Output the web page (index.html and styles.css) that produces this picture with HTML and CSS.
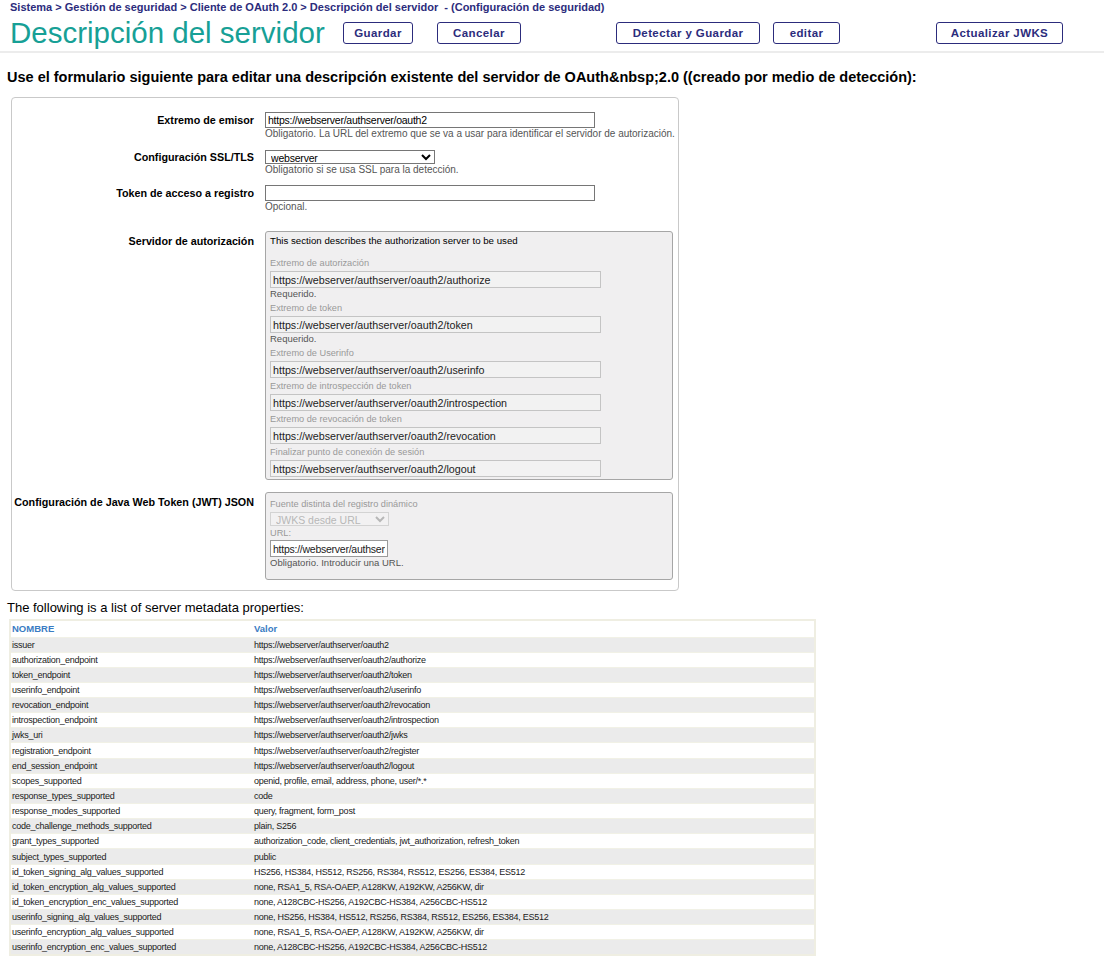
FILE: index.html
```html
<!DOCTYPE html>
<html lang="es">
<head>
<meta charset="utf-8">
<title>Descripción del servidor</title>
<link rel="stylesheet" href="styles.css">
</head>
<body>
<header class="top">
  <nav class="crumbs">Sistema &gt; Gestión de seguridad &gt; Cliente de OAuth 2.0 &gt; Descripción del servidor &nbsp;- (Configuración de seguridad)</nav>
  <div class="titlebar">
    <h1 class="title">Descripción del servidor</h1>
    <button class="btn btn-guardar">Guardar</button>
    <button class="btn btn-cancelar">Cancelar</button>
    <button class="btn btn-detectar">Detectar y Guardar</button>
    <button class="btn btn-editar">editar</button>
    <button class="btn btn-jwks">Actualizar JWKS</button>
  </div>
</header>

<main>
  <h2 class="intro">Use el formulario siguiente para editar una descripción existente del servidor de OAuth&amp;nbsp;2.0 ((creado por medio de detección):</h2>

  <div class="formbox">
    <div class="row row-1">
      <label class="lbl lbl-input">Extremo de emisor</label>
      <div class="field">
        <input class="txt" type="text" value="https://webserver/authserver/oauth2">
        <div class="help">Obligatorio. La URL del extremo que se va a usar para identificar el servidor de autorización.</div>
      </div>
    </div>
    <div class="row row-2">
      <label class="lbl lbl-select">Configuración SSL/TLS</label>
      <div class="field">
        <select class="sel"><option>webserver</option></select>
        <div class="help">Obligatorio si se usa SSL para la detección.</div>
      </div>
    </div>
    <div class="row row-3">
      <label class="lbl lbl-input">Token de acceso a registro</label>
      <div class="field">
        <input class="txt" type="text" value="">
        <div class="help">Opcional.</div>
      </div>
    </div>
    <div class="row row-4">
      <label class="lbl lbl-box">Servidor de autorización</label>
      <div class="field">
        <div class="group auth">
          <div class="desc">This section describes the authorization server to be used</div>
          <div class="glabel">Extremo de autorización</div>
          <input class="gtxt" type="text" disabled value="https://webserver/authserver/oauth2/authorize">
          <div class="req">Requerido.</div>
          <div class="glabel">Extremo de token</div>
          <input class="gtxt" type="text" disabled value="https://webserver/authserver/oauth2/token">
          <div class="req">Requerido.</div>
          <div class="glabel">Extremo de Userinfo</div>
          <input class="gtxt" type="text" disabled value="https://webserver/authserver/oauth2/userinfo">
          <div class="glabel">Extremo de introspección de token</div>
          <input class="gtxt" type="text" disabled value="https://webserver/authserver/oauth2/introspection">
          <div class="glabel">Extremo de revocación de token</div>
          <input class="gtxt" type="text" disabled value="https://webserver/authserver/oauth2/revocation">
          <div class="glabel">Finalizar punto de conexión de sesión</div>
          <input class="gtxt" type="text" disabled value="https://webserver/authserver/oauth2/logout">
        </div>
      </div>
    </div>
    <div class="row row-5">
      <label class="lbl lbl-box">Configuración de Java Web Token (JWT) JSON</label>
      <div class="field">
        <div class="group jwt">
          <div class="jlabel">Fuente distinta del registro dinámico</div>
          <select class="jsel" disabled><option>JWKS desde URL</option></select>
          <div class="jlabel jlabel-url">URL:</div>
          <input class="jtxt" type="text" value="https://webserver/authserver/oauth2/jwks">
          <div class="jhelp">Obligatorio. Introducir una URL.</div>
        </div>
      </div>
    </div>
  </div>

  <p class="listhead">The following is a list of server metadata properties:</p>
  <table class="meta">
    <thead>
      <tr><th>NOMBRE</th><th>Valor</th></tr>
    </thead>
    <tbody>
      <tr><td>issuer</td><td>https://webserver/authserver/oauth2</td></tr>
      <tr><td>authorization_endpoint</td><td>https://webserver/authserver/oauth2/authorize</td></tr>
      <tr><td>token_endpoint</td><td>https://webserver/authserver/oauth2/token</td></tr>
      <tr><td>userinfo_endpoint</td><td>https://webserver/authserver/oauth2/userinfo</td></tr>
      <tr><td>revocation_endpoint</td><td>https://webserver/authserver/oauth2/revocation</td></tr>
      <tr><td>introspection_endpoint</td><td>https://webserver/authserver/oauth2/introspection</td></tr>
      <tr><td>jwks_uri</td><td>https://webserver/authserver/oauth2/jwks</td></tr>
      <tr><td>registration_endpoint</td><td>https://webserver/authserver/oauth2/register</td></tr>
      <tr><td>end_session_endpoint</td><td>https://webserver/authserver/oauth2/logout</td></tr>
      <tr><td>scopes_supported</td><td>openid, profile, email, address, phone, user/*.*</td></tr>
      <tr><td>response_types_supported</td><td>code</td></tr>
      <tr><td>response_modes_supported</td><td>query, fragment, form_post</td></tr>
      <tr><td>code_challenge_methods_supported</td><td>plain, S256</td></tr>
      <tr><td>grant_types_supported</td><td>authorization_code, client_credentials, jwt_authorization, refresh_token</td></tr>
      <tr><td>subject_types_supported</td><td>public</td></tr>
      <tr><td>id_token_signing_alg_values_supported</td><td>HS256, HS384, HS512, RS256, RS384, RS512, ES256, ES384, ES512</td></tr>
      <tr><td>id_token_encryption_alg_values_supported</td><td>none, RSA1_5, RSA-OAEP, A128KW, A192KW, A256KW, dir</td></tr>
      <tr><td>id_token_encryption_enc_values_supported</td><td>none, A128CBC-HS256, A192CBC-HS384, A256CBC-HS512</td></tr>
      <tr><td>userinfo_signing_alg_values_supported</td><td>none, HS256, HS384, HS512, RS256, RS384, RS512, ES256, ES384, ES512</td></tr>
      <tr><td>userinfo_encryption_alg_values_supported</td><td>none, RSA1_5, RSA-OAEP, A128KW, A192KW, A256KW, dir</td></tr>
      <tr><td>userinfo_encryption_enc_values_supported</td><td>none, A128CBC-HS256, A192CBC-HS384, A256CBC-HS512</td></tr>
    </tbody>
  </table>
</main>
</body>
</html>
```
FILE: styles.css
```css
* { box-sizing: border-box; }

body {
  margin: 0;
  background: #fff;
  color: #000;
  font-family: "Liberation Sans", Arial, sans-serif;
}

/* ---------- header ---------- */
.top {
  border-bottom: 2px solid #ececec;
}

.crumbs {
  height: 14px;
  padding: 1px 0 0 10px;
  font-size: 11px;
  line-height: 12px;
  font-weight: bold;
  color: #2c2c7c;
  white-space: nowrap;
}

.titlebar {
  display: flex;
  align-items: center;
  height: 37px;
}

.title {
  flex: 0 0 343px;
  margin: 0;
  padding-left: 10px;
  font-size: 29.5px;
  line-height: 37px;
  font-weight: normal;
  color: #17a096;
  white-space: nowrap;
}

.btn {
  height: 22px;
  padding: 0;
  background: #fff;
  border: 1px solid #2c2c7c;
  border-radius: 3px;
  color: #2c2c7c;
  font-family: "Liberation Sans", Arial, sans-serif;
  font-size: 11.5px;
  letter-spacing: 0.4px;
  font-weight: bold;
  white-space: nowrap;
}

.btn-guardar { width: 70px; }
.btn-cancelar { width: 84px; margin-left: 24px; }
.btn-detectar { width: 144px; margin-left: 95px; }
.btn-editar { width: 67px; margin-left: 13px; }
.btn-jwks { width: 127px; margin-left: 96px; }

/* ---------- intro ---------- */
.intro {
  margin: 16px 0 0 7px;
  font-size: 14.5px;
  line-height: 16px;
  font-weight: bold;
  white-space: nowrap;
}

/* ---------- form ---------- */
.formbox {
  width: 668px;
  margin: 12px 0 0 11px;
  padding: 14px 0 10px 0;
  border: 1px solid #c9c9c9;
  border-radius: 4px;
}

.row {
  display: grid;
  grid-template-columns: 242px 407px;
  column-gap: 11px;
}

.row-1 { margin-bottom: 10px; }
.row-2 { margin-bottom: 9px; }
.row-3 { margin-bottom: 18px; }
.row-4 { margin-bottom: 12px; }

.lbl {
  text-align: right;
  font-size: 10.75px;
  font-weight: bold;
  white-space: nowrap;
}

.lbl-input { line-height: 17px; }
.lbl-select { line-height: 15px; }
.lbl-box { line-height: 16px; margin-top: 2px; }

.field {
  display: flex;
  flex-direction: column;
  align-items: flex-start;
}

.txt {
  width: 330px;
  height: 16px;
  margin: 0;
  padding: 0 2px;
  border: 1px solid #767676;
  border-radius: 0;
  font-family: "Liberation Sans", Arial, sans-serif;
  font-size: 10.5px;
  letter-spacing: -0.25px;
  color: #000;
}

.sel {
  width: 170px;
  height: 14px;
  margin: 0;
  padding: 0 0 0 1px;
  border: 1px solid #767676;
  border-radius: 0;
  background: #fff;
  font-family: "Liberation Sans", Arial, sans-serif;
  font-size: 10.5px;
  letter-spacing: -0.2px;
  line-height: 12px;
  color: #000;
}

.help {
  font-size: 10px;
  line-height: 12px;
  color: #555;
  white-space: nowrap;
}

.group {
  width: 408px;
  background: #f0eff0;
  border: 1px solid #a6a6a6;
  border-radius: 3px;
  display: flex;
  flex-direction: column;
  align-items: flex-start;
}

.auth {
  padding: 1px 4px 2px 4px;
}

.desc {
  font-size: 9.7px;
  line-height: 16px;
  color: #000;
  margin-bottom: 6px;
  white-space: nowrap;
}

.glabel {
  font-size: 9.2px;
  line-height: 16px;
  color: #999;
  white-space: nowrap;
}

.gtxt {
  width: 331px;
  height: 17px;
  margin: 0;
  padding: 0 2px;
  background: #f2f2f2;
  border: 1px solid #c4c4c4;
  border-radius: 0;
  font-family: "Liberation Sans", Arial, sans-serif;
  font-size: 10.7px;
  color: #222;
}

.req {
  font-size: 9.5px;
  line-height: 12px;
  color: #555;
}

.jwt {
  height: 88px;
  padding: 3px 4px 2px 4px;
}

.jlabel {
  font-size: 9.2px;
  line-height: 16px;
  color: #999;
  white-space: nowrap;
}

.jlabel-url { line-height: 14px; }

.jsel {
  width: 119px;
  height: 14px;
  margin: 0;
  padding: 0 0 0 1px;
  background: #f3f3f3;
  border: 1px solid #c8c8c8;
  border-radius: 0;
  font-family: "Liberation Sans", Arial, sans-serif;
  font-size: 10.5px;
  line-height: 12px;
  color: #a0a0a0;
}

.jtxt {
  width: 118px;
  height: 17px;
  margin: 0;
  padding: 0 2px;
  background: #fff;
  border: 1px solid #9a9a9a;
  border-radius: 0;
  font-family: "Liberation Sans", Arial, sans-serif;
  font-size: 10.5px;
  letter-spacing: -0.25px;
  color: #222;
}

.jhelp {
  font-size: 9.5px;
  line-height: 12px;
  color: #555;
  white-space: nowrap;
}

/* ---------- metadata table ---------- */
.listhead {
  margin: 10px 0 0 7px;
  font-size: 13px;
  line-height: 14px;
}

.meta {
  width: 807px;
  margin: 4px 0 0 9px;
  border-collapse: collapse;
  border: 2px solid #efeee2;
  font-family: "Liberation Sans", Arial, sans-serif;
  font-size: 9px;
  letter-spacing: -0.25px;
  color: #1a1a1a;
}

.meta th {
  height: 17px;
  padding: 0 1px;
  text-align: left;
  font-size: 9.5px;
  letter-spacing: 0;
  font-weight: bold;
  color: #3a7cc3;
  background: #fff;
}

.meta th:first-child,
.meta td:first-child { width: 243px; }

.meta td {
  height: 15.15px;
  padding: 0 1px;
  border-top: 1px solid #f1f1e6;
  white-space: nowrap;
}

.meta tbody tr:nth-child(odd) td { background: #ebebeb; }
.meta tbody tr:nth-child(even) td { background: #fff; }
```
